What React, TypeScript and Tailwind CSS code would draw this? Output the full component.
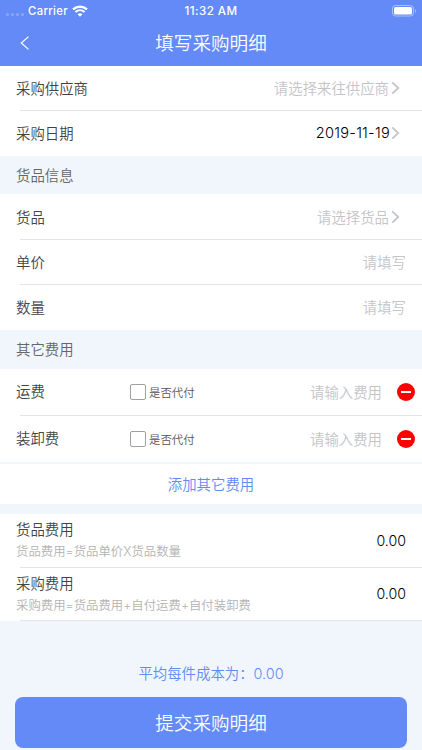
import type { ReactNode } from "react";

const extraFees = [
  { id: 1, title: "运费" },
  { id: 2, title: "装卸费" },
];

const totals = [
  { id: 1, title: "货品费用", hint: "货品费用=货品单价X货品数量", value: "0.00" },
  {
    id: 2,
    title: "采购费用",
    hint: "采购费用=货品费用+自付运费+自付装卸费",
    value: "0.00",
  },
];

const Chevron = () => (
  <svg className="w-[9px] h-[14px]" viewBox="0 0 9 14" fill="none">
    <path d="M1.3 1.3L7.2 7L1.3 12.7" stroke="#c4c4c8" strokeWidth="1.8" />
  </svg>
);

const Divider = () => <div className="h-px ml-5 bg-[#e3e4e6] shrink-0" />;

const SectionTitle = ({ children }: { children: ReactNode }) => (
  <h2 className="flex items-center px-4 pt-0.5 text-[#666666] shrink-0 h-[38px]">
    {children}
  </h2>
);

type FieldRowProps = {
  label: string;
  placeholder?: string;
  value?: string;
  arrow?: boolean;
};

const FieldRow = ({ label, placeholder, value, arrow }: FieldRowProps) => (
  <div
    className={`flex items-center justify-between h-11 pt-0.5 pl-4 ${
      arrow ? "pr-[22px]" : "pr-4"
    }`}
  >
    <span className="text-[#444444]">{label}</span>
    <div className="flex items-center gap-0.5">
      {value ? (
        <span className="text-black text-[14.6px] tracking-[0.25px] -mr-px pb-0.5">
          {value}
        </span>
      ) : (
        <span className="text-[#c4c4c8]">{placeholder}</span>
      )}
      {arrow && (
        <span className="pb-0.5">
          <Chevron />
        </span>
      )}
    </div>
  </div>
);

const App = () => {
  return (
    <div className="w-full h-[750px] overflow-hidden flex flex-col bg-[#f0f6fb] text-[14.4px] leading-5 font-[Inter,'Noto_Sans_CJK_SC',sans-serif] font-[350]">
      {/* HEADER */}
      <header className="h-[66px] shrink-0 bg-[#648af7] text-white">
        <div className="grid grid-cols-3 items-center h-[21px] text-[11.3px] font-medium">
          <div className="flex items-center pl-1.5">
            <div className="flex gap-[2px] pt-[7px] mr-1">
              {[1, 2, 3, 4].map((dot) => (
                <i key={dot} className="w-[3px] h-[3px] rounded-full bg-white/25" />
              ))}
            </div>
            <span className="tracking-[0.35px]">Carrier</span>
            <svg className="w-4 h-3 ml-1" viewBox="0 0 16 12" fill="none">
              <path d="M1 4.4C5 .6 11 .6 15 4.4" stroke="white" strokeWidth="2.2" />
              <path d="M3.4 7.1C6.1 4.7 9.9 4.7 12.6 7.1" stroke="white" strokeWidth="2" />
              <path d="M5.6 9.3C7 8 9 8 10.4 9.3L8 11.7Z" fill="white" />
            </svg>
          </div>
          <span className="text-center text-[11.6px] tracking-[0.45px]">11:32 AM</span>
          <div className="flex justify-end pr-[5px]">
            <svg className="w-[25px] h-3" viewBox="0 0 25 12" fill="none">
              <rect x=".5" y=".5" width="21" height="10.5" rx="3" stroke="white" strokeOpacity=".45" />
              <rect x="2" y="2" width="18" height="7.5" rx="1.6" fill="white" />
              <path d="M23 4V8C24.3 7.4 24.3 4.6 23 4Z" fill="white" fillOpacity=".45" />
            </svg>
          </div>
        </div>
        <div className="grid grid-cols-[1fr_auto_1fr] items-center h-[43px] px-5">
          <svg className="w-[10px] h-[14px]" viewBox="0 0 10 14" fill="none">
            <path d="M8.5 .6L1.3 7L8.5 13.4" stroke="white" strokeWidth="1.2" />
          </svg>
          <h1 className="text-[18.6px]">填写采购明细</h1>
        </div>
      </header>

      {/* SUPPLIER & DATE */}
      <section className="bg-white h-[90px] shrink-0">
        <FieldRow label="采购供应商" placeholder="请选择来往供应商" arrow />
        <Divider />
        <FieldRow label="采购日期" value="2019-11-19" arrow />
      </section>

      {/* GOODS */}
      <SectionTitle>货品信息</SectionTitle>
      <section className="bg-white h-[136px] pt-px shrink-0">
        <FieldRow label="货品" placeholder="请选择货品" arrow />
        <Divider />
        <FieldRow label="单价" placeholder="请填写" />
        <Divider />
        <FieldRow label="数量" placeholder="请填写" />
      </section>

      {/* EXTRA FEES */}
      <SectionTitle>其它费用</SectionTitle>
      <section className="bg-white mt-px shrink-0">
        {extraFees.map((fee) => (
          <div key={fee.id}>
            {fee.id > 1 && <Divider />}
            <div className="flex items-center h-[46px] pl-4 pr-[7px]">
              <span className="w-[114px] text-[#444444]">{fee.title}</span>
              <span className="size-4 rounded-[2px] border border-[#a0a0a0]" />
              <span className="ml-[3px] pt-px text-[11.4px] text-[#555555]">
                是否代付
              </span>
              <span className="ml-auto mr-[15px] pt-0.5 text-[#c4c4c8]">
                请输入费用
              </span>
              <span className="size-[18px] rounded-full bg-[#fe0000] flex items-center justify-center">
                <i className="w-[10px] h-[2px] bg-white" />
              </span>
            </div>
          </div>
        ))}
      </section>
      <div className="h-[2px] shrink-0" />
      <button className="h-[40px] pt-0.5 shrink-0 bg-white text-[#648af7]">
        添加其它费用
      </button>

      {/* TOTALS */}
      <section className="mt-[10px] bg-white shrink-0">
        {totals.map((total) => (
          <div key={total.id}>
            <div
              className={`flex items-center justify-between px-4 ${
                total.id === 1 ? "h-[53px]" : "h-[52px]"
              }`}
            >
              <div className="flex flex-col pt-px">
                <span className="text-[#444444] h-[21px] leading-[20px]">{total.title}</span>
                <span className="text-[12.4px] leading-[21px] text-[#b2b2b2]">
                  {total.hint}
                </span>
              </div>
              <span className="text-black text-[14.2px]">{total.value}</span>
            </div>
            <Divider />
          </div>
        ))}
      </section>

      {/* SUBMIT */}
      <p className="mt-[43px] text-center text-[#648af7]">
        平均每件成本为：0.00
      </p>
      <button className="mt-[13px] mx-[15px] h-[51px] shrink-0 rounded-lg bg-[#648af7] text-white text-[18.6px]">
        提交采购明细
      </button>
    </div>
  );
};

export default App;
